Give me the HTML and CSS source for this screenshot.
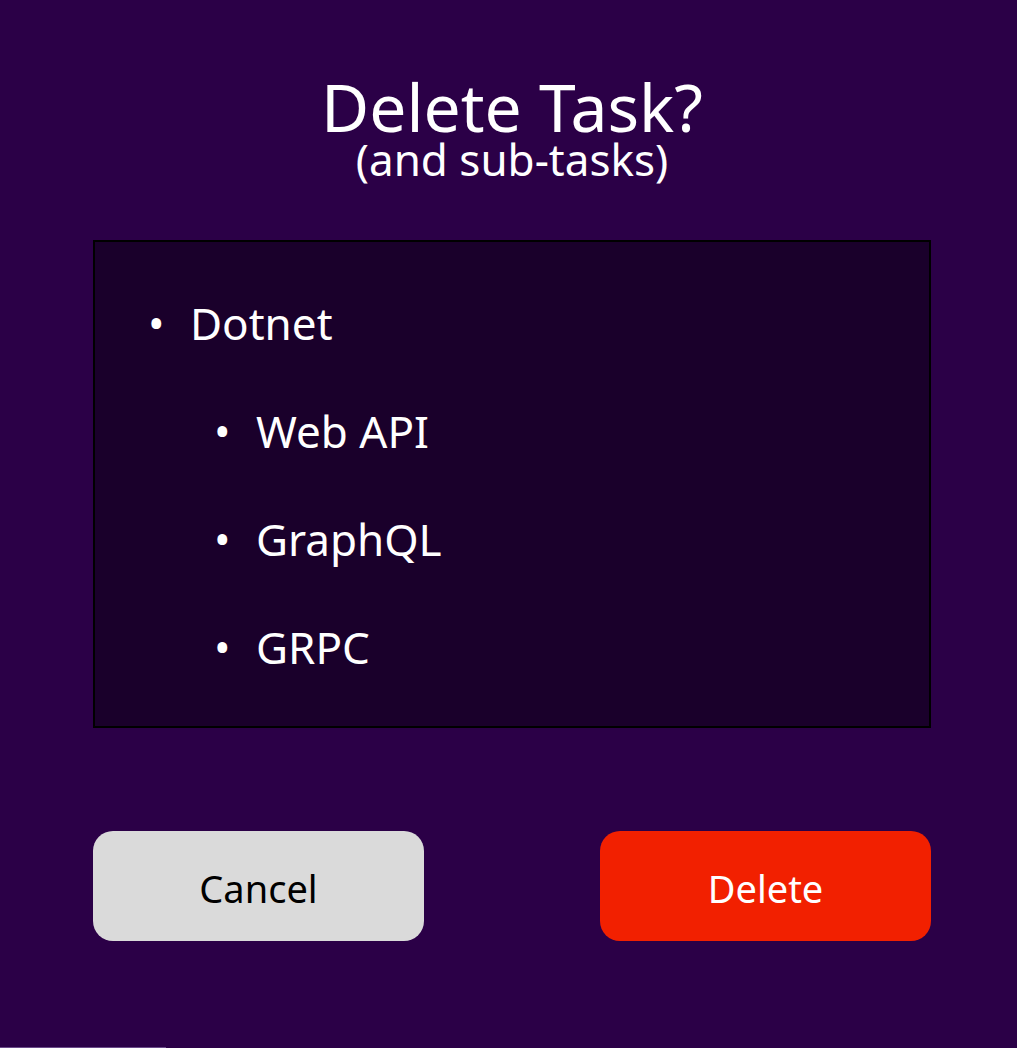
FILE: index.html
```html
<!DOCTYPE html>
<html lang="en">
<head>
<meta charset="utf-8">
<title>Delete Task?</title>
<link rel="stylesheet" href="styles.css">
</head>
<body>
<div class="dialog">
  <h1 class="title">Delete Task?</h1>
  <p class="subtitle">(and sub-tasks)</p>
  <div class="tasks">
    <div class="item"><span class="bullet">•</span><span>Dotnet</span></div>
    <div class="item nested"><span class="bullet">•</span><span>Web API</span></div>
    <div class="item nested"><span class="bullet">•</span><span>GraphQL</span></div>
    <div class="item nested"><span class="bullet">•</span><span>GRPC</span></div>
  </div>
  <div class="actions">
    <button class="btn btn-cancel">Cancel</button>
    <button class="btn btn-delete">Delete</button>
  </div>
</div>
<div class="scroll-thumb"></div>
</body>
</html>
```
FILE: styles.css
```css
html, body {
  margin: 0;
  padding: 0;
}
body {
  background: #2b0047;
  font-family: "Noto Sans", "Open Sans", sans-serif;
  color: #ffffff;
  height: 1048px;
  overflow: hidden;
  position: relative;
}
.dialog {
  width: 838px;
  margin-left: 93px;
  padding-top: 76px;
}
.title {
  margin: 0;
  font-size: 66px;
  font-weight: 400;
  line-height: 60px;
  text-align: center;
}
.subtitle {
  margin: 3px 0 0;
  font-size: 44px;
  line-height: 40px;
  text-align: center;
}
.tasks {
  margin-top: 61px;
  background: #1a002b;
  border: 2px solid #000000;
  padding: 27px 0 25px 53px;
}
.item {
  display: flex;
  font-size: 44px;
  line-height: 108px;
}
.item.nested {
  padding-left: 66px;
}
.bullet {
  width: 42px;
}
.actions {
  display: flex;
  justify-content: space-between;
  margin-top: 103px;
}
.btn {
  width: 331px;
  height: 110px;
  border: none;
  border-radius: 20px;
  font-family: "Noto Sans", "Open Sans", sans-serif;
  font-size: 38px;
  padding: 4px 0 0;
}
.btn-cancel {
  background: #dadada;
  color: #000000;
}
.btn-delete {
  background: #f22000;
  color: #ffffff;
}
.scroll-thumb {
  position: absolute;
  left: 0;
  bottom: 0;
  width: 166px;
  height: 1px;
  background: #6a4a8a;
}
```
